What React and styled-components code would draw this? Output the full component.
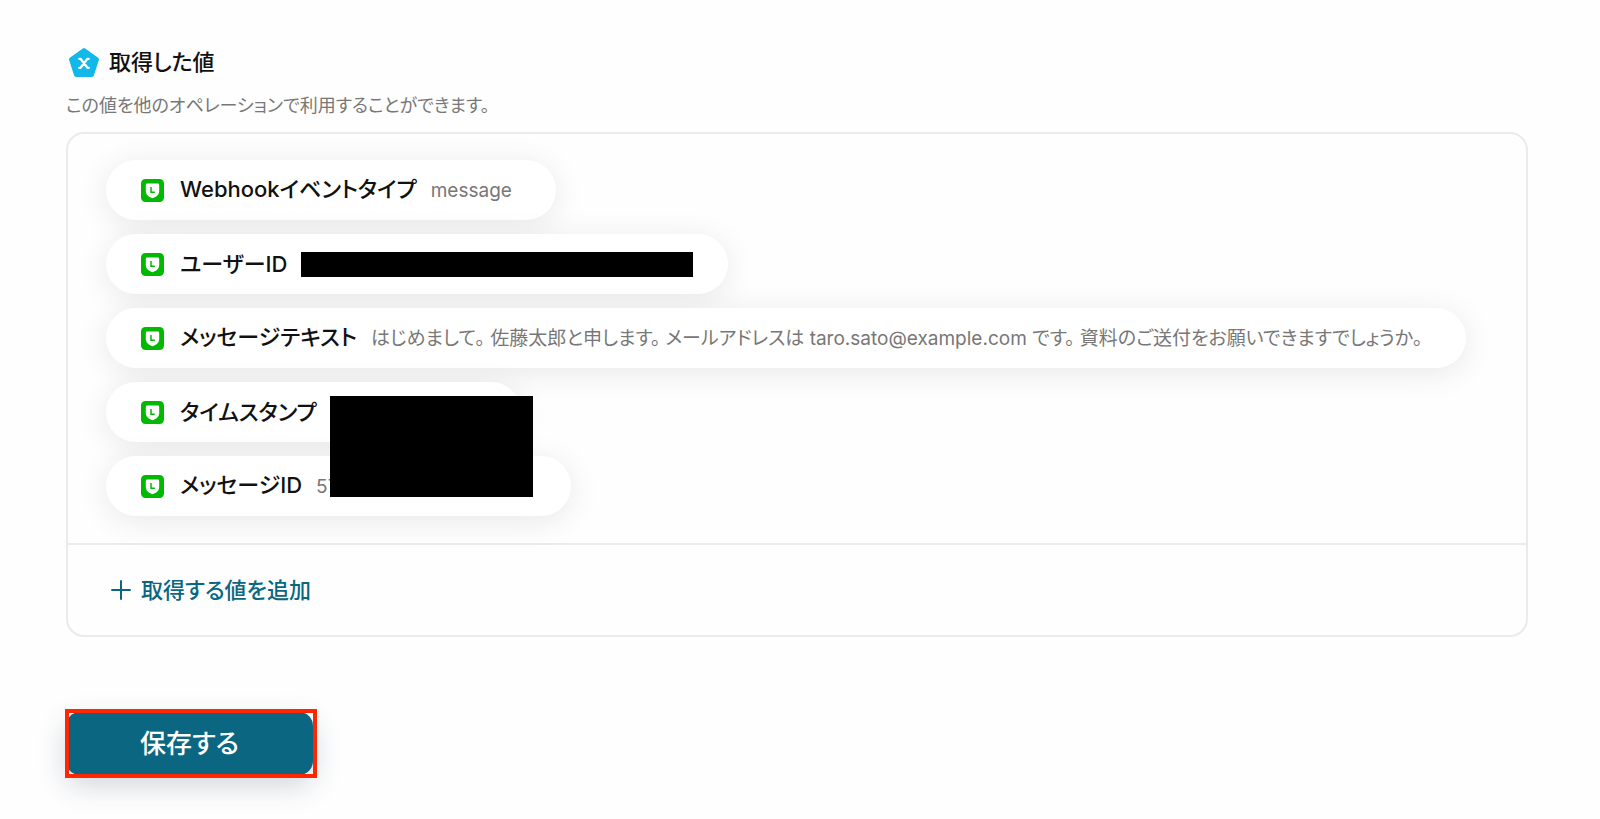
import styled, { createGlobalStyle } from "styled-components";

const GlobalStyle = createGlobalStyle`
  * {
    box-sizing: border-box;
  }

  body {
    margin: 0;
    background: #fefefe;
    color: #111;
    font-family: Inter, "Noto Sans CJK JP", sans-serif;
    font-feature-settings: "palt";
  }
`;

const values = [
  { label: "Webhookイベントタイプ", value: "message" },
  { label: "ユーザーID", masked: true },
  {
    label: "メッセージテキスト",
    value:
      "はじめまして。 佐藤太郎と申します。 メールアドレスは taro.sato@example.com です。 資料のご送付をお願いできますでしょうか。",
  },
  { label: "タイムスタンプ", value: "", width: 146 },
  { label: "メッセージID", value: "57", width: 211 },
];

const OutputIcon = () => (
  <svg width="32" height="32" viewBox="0 0 32 32" aria-hidden="true">
    <path
      d="M16 4 L29 13.4 L24 29 L8 29 L3 13.4 Z"
      fill="#12b8ea"
      stroke="#12b8ea"
      strokeWidth="4"
      strokeLinejoin="round"
    />
    <path
      d="M11.2 12.8 h1.3 l7 9 h1.3 M20.8 12.8 h-1.3 l-7 9 h-1.3"
      fill="none"
      stroke="#fff"
      strokeWidth="2.3"
      strokeLinecap="round"
      strokeLinejoin="round"
    />
  </svg>
);

const BotIcon = () => (
  <svg width="23" height="23" viewBox="0 0 23 23" aria-hidden="true">
    <rect width="23" height="23" rx="4.5" fill="#00b900" />
    <path
      d="M6.2 4.6 H16.8 Q18.2 4.6 18.2 6 V12 C18.2 15.8 15.2 18 11.5 19.2 C7.8 18 4.8 15.8 4.8 12 V6 Q4.8 4.6 6.2 4.6 Z"
      fill="#fff"
    />
    <path d="M10 8 V13.3 H13.8" fill="none" stroke="#00b900" strokeWidth="1.5" />
  </svg>
);

const PlusIcon = () => (
  <svg width="20" height="20" viewBox="0 0 20 20" aria-hidden="true">
    <path d="M10 1 V19 M1 10 H19" stroke="#0b6781" strokeWidth="2" strokeLinecap="round" />
  </svg>
);

const App = () => {
  return (
    <>
      <GlobalStyle />
      <Page>
        <Header>
          <OutputIcon />
          <Title>取得した値</Title>
        </Header>
        <Description>この値を他のオペレーションで利用することができます。</Description>
        <Card>
          <ValueList>
            {values.map(({ label, value, width, masked }) => (
              <Pill key={label} $masked={masked}>
                <BotIcon />
                <PillText>
                  <Label>{label}</Label>
                  {masked ? <Mask /> : <Value $width={width}>{value}</Value>}
                </PillText>
              </Pill>
            ))}
            <MaskOverlay />
          </ValueList>
          <CardFooter>
            <AddButton type="button">
              <PlusIcon />
              取得する値を追加
            </AddButton>
          </CardFooter>
        </Card>
        <SaveArea>
          <SaveButton type="button">保存する</SaveButton>
          <Highlight />
        </SaveArea>
      </Page>
    </>
  );
};

const Page = styled.main`
  padding: 46px 72px 40px 66px;
`;

const Header = styled.header`
  display: flex;
  align-items: center;
  gap: 9px;
  padding-left: 2px;
`;

const Title = styled.h1`
  margin: 0;
  font-size: 22px;
  font-weight: 500;
  line-height: 32px;
`;

const Description = styled.p`
  margin: 15px 0 13px;
  color: #777;
  font-size: 18px;
  line-height: 26px;
`;

const Card = styled.section`
  border: 2px solid #ebebeb;
  border-radius: 18px;
`;

const ValueList = styled.ul`
  position: relative;
  display: flex;
  flex-direction: column;
  align-items: flex-start;
  gap: 14px;
  margin: 0;
  padding: 26px 38px 27px;
  list-style: none;
`;

const Pill = styled.li`
  display: flex;
  align-items: center;
  gap: 16px;
  height: 60px;
  padding: 0 ${({ $masked }) => ($masked ? "35px" : "44px")} 0 35px;
  border-radius: 30px;
  background: #fff;
  box-shadow: 0 5px 32px rgba(0, 0, 0, 0.09);
  line-height: 32px;
  white-space: nowrap;

  svg {
    flex: none;
  }
`;

const PillText = styled.div`
  display: flex;
  align-items: baseline;
  gap: 14px;
`;

const Label = styled.span`
  font-size: 22px;
  font-weight: 500;
`;

const Value = styled.span`
  width: ${({ $width }) => ($width ? `${$width}px` : "auto")};
  color: #777;
  font-size: 19px;
`;

const Mask = styled.span`
  align-self: center;
  width: 392px;
  height: 25px;
  background: #000;
`;

// Covers the timestamp and message id across both rows
const MaskOverlay = styled.li`
  position: absolute;
  left: 262px;
  bottom: 46px;
  width: 203px;
  height: 101px;
  background: #000;
`;

const CardFooter = styled.div`
  padding: 26px 40px;
  border-top: 2px solid #ebebeb;
`;

const AddButton = styled.button`
  display: flex;
  align-items: center;
  gap: 10px;
  padding: 0 3px;
  border: none;
  background: none;
  color: #0b6781;
  font: inherit;
  font-feature-settings: inherit;
  font-size: 22px;
  font-weight: 500;
  line-height: 38px;
  cursor: pointer;
`;

const SaveArea = styled.div`
  position: relative;
  width: fit-content;
  margin-top: 75px;
`;

const SaveButton = styled.button`
  display: block;
  min-width: 247px;
  height: 63px;
  border: none;
  border-radius: 14px;
  background: #0b6781;
  box-shadow: 0 10px 30px rgba(20, 50, 65, 0.2);
  color: #fff;
  font: inherit;
  font-feature-settings: inherit;
  font-size: 26px;
  font-weight: 500;
  line-height: 40px;
  cursor: pointer;
`;

const Highlight = styled.span`
  position: absolute;
  inset: -3px -4px -3px -1px;
  border: 4px solid #ff2600;
  pointer-events: none;
`;

export default App;
